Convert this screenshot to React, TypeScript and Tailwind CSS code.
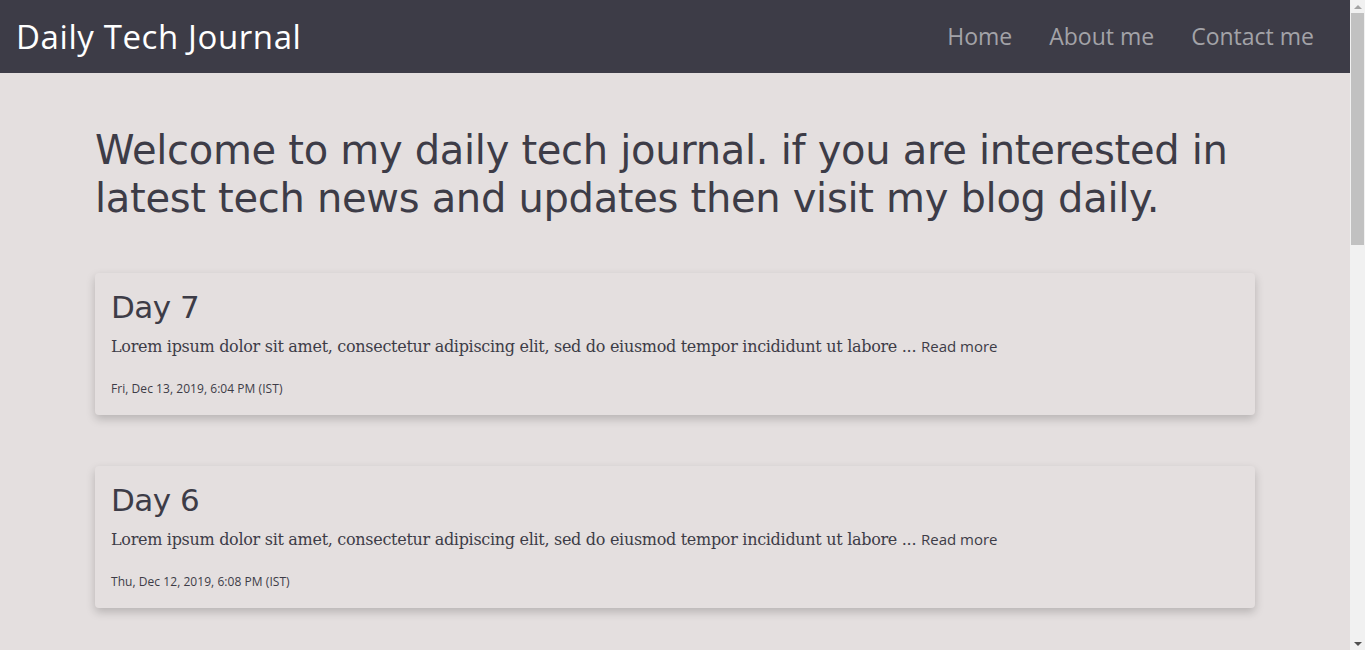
import React from 'react';

const posts = [
  { day: 7, date: 'Fri, Dec 13, 2019, 6:04 PM (IST)' },
  { day: 6, date: 'Thu, Dec 12, 2019, 6:08 PM (IST)' },
  { day: 5, date: 'Wed, Dec 11, 2019, 6:15 PM (IST)' },
  { day: 4, date: 'Tue, Dec 10, 2019, 6:02 PM (IST)' },
  { day: 3, date: 'Mon, Dec 9, 2019, 6:11 PM (IST)' },
  { day: 2, date: 'Sun, Dec 8, 2019, 6:20 PM (IST)' },
  { day: 1, date: 'Sat, Dec 7, 2019, 6:05 PM (IST)' },
];

const App: React.FC = () => {
  return (
    <div className="h-screen flex overflow-hidden bg-[#e4dfdf] text-[#3d3c47]">
      <div className="flex-1 overflow-hidden">
        {/* Header */}
        <header className="h-[73px] bg-[#3d3c47] flex items-center justify-between pl-4 pr-9">
          <div className="text-white text-[33px] tracking-[0.6px] font-['Open_Sans',sans-serif]">Daily Tech Journal</div>
          <nav className="flex gap-[37px] text-[23px] text-[#a3a3a8] font-['Open_Sans',sans-serif]">
            <a href="#home">Home</a>
            <a href="#about">About me</a>
            <a href="#contact">Contact me</a>
          </nav>
        </header>

        <main className="w-[1160px] mx-auto pt-[53px] pb-[60px]">
          <h1 className="text-[40px] leading-[48px] font-['DejaVu_Sans',sans-serif] tracking-[-0.3px] mb-[51px]">
            Welcome to my daily tech journal. if you are interested in latest tech news and updates then visit my blog daily.
          </h1>

          <div className="flex flex-col gap-[51px]">
            {posts.map((p) => (
              <article key={p.day} className="rounded bg-[#e4dfdf] shadow-[0_4px_10px_rgba(0,0,0,0.2)] px-4 pt-[14px] pb-[17px]">
                <h2 className="text-[31px] leading-[40px] font-['DejaVu_Sans',sans-serif] tracking-[-0.5px]">Day {p.day}</h2>
                <p className="mt-[7px] text-[16px] leading-[24px] font-['DejaVu_Serif',serif] tracking-[-0.3px]">
                  Lorem ipsum dolor sit amet, consectetur adipiscing elit, sed do eiusmod tempor incididunt ut labore ...{' '}
                  <a href="#more" className="font-['Open_Sans',sans-serif] tracking-normal text-[15px]">Read more</a>
                </p>
                <div className="mt-[21px] text-[12px] tracking-[0.05px] font-['Open_Sans',sans-serif]">{p.date}</div>
              </article>
            ))}
          </div>
        </main>
      </div>

      {/* Scrollbar */}
      <aside className="w-[15px] shrink-0 bg-[#f1f1f1] flex flex-col items-center">
        <div className="h-[13px] flex items-center justify-center">
          <div className="w-0 h-0 border-x-[4px] border-x-transparent border-b-[4px] border-b-[#a3a3a3]" />
        </div>
        <div className="w-[13px] h-[232px] bg-[#c1c1c1]" />
        <div className="flex-1" />
        <div className="h-[13px] flex items-center justify-center">
          <div className="w-0 h-0 border-x-[4px] border-x-transparent border-t-[4px] border-t-[#505050]" />
        </div>
      </aside>
    </div>
  );
};

export default App;
